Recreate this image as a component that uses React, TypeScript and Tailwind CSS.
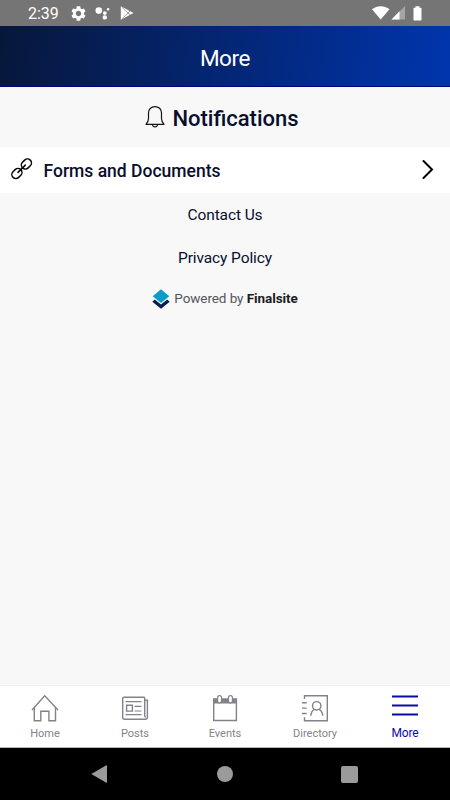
import type { ReactNode } from "react";

const StatusBar = () => (
  <div className="flex h-[26px] shrink-0 items-center justify-between bg-[#757575] pl-[28px] pr-[28px] text-white">
    <div className="flex items-center">
      <span className="w-[43px] text-[16px] leading-[26px] pt-[2px]">
        2:39
      </span>
      <svg width="15" height="15" viewBox="2 2 20 20" fill="white">
        <path d="M19.14 12.94c.04-.3.06-.61.06-.94 0-.32-.02-.64-.07-.94l2.03-1.58c.18-.14.23-.41.12-.61l-1.92-3.32c-.12-.22-.37-.29-.59-.22l-2.39.96c-.5-.38-1.03-.7-1.62-.94l-.36-2.54c-.04-.24-.24-.41-.48-.41h-3.84c-.24 0-.43.17-.47.41l-.36 2.54c-.59.24-1.13.57-1.62.94l-2.39-.96c-.22-.08-.47 0-.59.22L2.74 8.87c-.12.21-.08.47.12.61l2.03 1.58c-.05.3-.09.63-.09.94s.02.64.07.94l-2.03 1.58c-.18.14-.23.41-.12.61l1.92 3.32c.12.22.37.29.59.22l2.39-.96c.5.38 1.03.7 1.62.94l.36 2.54c.05.24.24.41.48.41h3.84c.24 0 .44-.17.47-.41l.36-2.54c.59-.24 1.13-.56 1.62-.94l2.39.96c.22.08.47 0 .59-.22l1.92-3.32c.12-.22.07-.47-.12-.61l-2.01-1.58zM12 15.6c-1.98 0-3.6-1.62-3.6-3.6s1.62-3.6 3.6-3.6 3.6 1.62 3.6 3.6-1.62 3.6-3.6 3.6z" />
      </svg>
      <svg className="ml-[9px]" width="15" height="14" viewBox="0 0 15 14" fill="white">
        <circle cx="3.8" cy="4.6" r="3.3" />
        <circle cx="9.8" cy="7.1" r="1.9" />
        <circle cx="13.1" cy="3.3" r="1.2" />
        <circle cx="9.8" cy="11.4" r="2.2" />
      </svg>
      <svg className="ml-[10px]" width="14" height="14" viewBox="0 0 14 14">
        <path d="M.8.3 13.500 7 .8 13.700Z" fill="white" />
        <path
          d="M2.200 1.500 8.600 7.600M2.200 12.500l8.200-7.700M8.300 7l2.800 2.600"
          fill="none"
          stroke="#757575"
          strokeWidth="0.7"
        />
      </svg>
    </div>
    <div className="flex items-center">
      <svg width="18" height="14" viewBox="0 0 18 14">
        <path d="M0 3.200C5.300-.8 12.200-.8 17.500 3.200L8.700 13.500Z" fill="white" />
      </svg>
      <svg className="ml-[1px]" width="14" height="14" viewBox="0 0 14 14">
        <path d="M14 0v13.500H.5Z" fill="white" opacity="0.35" />
        <path d="M8.500 5.300v8.200H.5Z" fill="white" />
      </svg>
      <svg className="ml-[8px]" width="9" height="15" viewBox="0 0 9 15" fill="white">
        <path d="M2.500.3h4v1.400h1.200q.8 0 .8.800v11.200q0 .8-.8.8H1.300q-.8 0-.8-.8V2.500q0-.8.8-.8h1.200Z" />
      </svg>
    </div>
  </div>
);

const BellIcon = () => (
  <svg
    width="20"
    height="24"
    viewBox="0 0 20 24"
    fill="none"
    stroke="#151515"
    strokeWidth="1.2"
    strokeLinejoin="round"
  >
    <path d="M10 1.600C5.800 1.600 3.500 4.500 3.500 8v5.500c0 2.500-.8 4-2.500 5.900h18c-1.700-1.900-2.500-3.400-2.500-5.900V8c0-3.500-2.300-6.400-6.500-6.400Z" />
    <path d="M7.300 19.600c.4 1.500 1.300 2.300 2.700 2.300s2.300-.8 2.700-2.300" />
  </svg>
);

const LinkIcon = () => (
  <svg
    className="-mt-[2px]"
    width="22"
    height="22"
    viewBox="0 0 22 22"
    fill="none"
    stroke="#080808"
    strokeWidth="1.500"
    strokeLinecap="round"
  >
    <rect x="-5.500" y="-4" width="11" height="8" rx="4" transform="translate(5.900 15.500) rotate(-45)" />
    <rect x="-5.500" y="-4" width="11" height="8" rx="4" transform="translate(15.400 6) rotate(-45)" />
    <path d="m7 14.400 7.300-7.300" />
  </svg>
);

const FinalsiteLogo = () => (
  <svg width="18" height="20" viewBox="0 0 18 20">
    <path d="m2.800 10.500 6.200 5 6.200-5 2.500 2.300L9 19.700.3 12.800Z" fill="#0b1c50" />
    <path d="m9 .2 8.300 7L9 13.900.7 7.200Z" fill="#0d9bc9" />
  </svg>
);

const HomeIcon = () => (
  <>
    <path d="M2 17 14.700 2.800 28 17" />
    <path d="M4.300 14.700v13h6.500v-9.400h8.100v9.400h6.600v-13" />
  </>
);

const PostsIcon = () => (
  <>
    <path d="M24.700 4.300H4q-1.300 0-1.300 1.300v18.700q0 2 2 2h20.500q2.200 0 2.200-2V7.300h-2.700" />
    <path d="M24.700 4.300v18.400q0 1.300 1.200 1.300" />
    <path d="M5.500 8.600h16M14.500 13.300h7M14.500 18h7M5.500 21.600h16" strokeWidth="1.200" />
    <path d="M6.600 12.300h5.800v5.800H6.600Z" />
  </>
);

const EventsIcon = () => (
  <>
    <path d="M3.700 6h22.700v21.500H3.700Z" />
    <path d="M3.500 6h23v4.500h-23Z" fill="#828388" stroke="none" />
    <rect x="7.600" y="2.600" width="3.900" height="7.300" rx="1.900" fill="white" strokeWidth="1.200" />
    <rect x="18.500" y="2.600" width="3.900" height="7.300" rx="1.900" fill="white" strokeWidth="1.200" />
  </>
);

const DirectoryIcon = () => (
  <>
    <path d="M4.500 6V2.700h22.800v25H4.500v-3.400" />
    <path d="M2 9.700h4.700M2 15.100h4.700M2 20.500h4.700" />
    <circle cx="16.700" cy="12.800" r="4.200" />
    <path d="M10.900 22.700c.2-3.200 1.400-5.300 3.700-6.500M22.700 22.700c-.2-3.200-1.600-5.300-3.900-6.500" />
  </>
);

const MoreIcon = () => (
  <path d="M2 3.500h26M2 12.500h26M2 21.500h26" strokeWidth="2" />
);

const tabs: { label: string; icon: ReactNode; active?: boolean }[] = [
  { label: "Home", icon: <HomeIcon /> },
  { label: "Posts", icon: <PostsIcon /> },
  { label: "Events", icon: <EventsIcon /> },
  { label: "Directory", icon: <DirectoryIcon /> },
  { label: "More", icon: <MoreIcon />, active: true },
];

const TabBar = () => (
  <nav className="grid h-[63px] shrink-0 grid-cols-5 border-t border-b border-t-[#f0f0f0] border-b-[#b5b5b5] bg-white">
    {tabs.map(({ label, icon, active }) => (
      <div
        key={label}
        className={`flex flex-col items-center pt-[7px] ${
          active ? "text-[#0b0ba8]" : "text-[#828388]"
        }`}
      >
        <svg
          width="30"
          height="30"
          viewBox="0 0 30 30"
          fill="none"
          stroke="currentColor"
          strokeWidth="1.400"
        >
          {icon}
        </svg>
        <span
          className={
            active
              ? "mt-[3px] text-[12px] leading-[14px] tracking-[-0.2px]"
              : "mt-[4px] text-[11px] leading-[14px]"
          }
        >
          {label}
        </span>
      </div>
    ))}
  </nav>
);

const SystemNav = () => (
  <div className="grid h-[52px] shrink-0 grid-cols-[198px_53px_196px] items-center justify-items-center bg-black">
    <svg width="16" height="18" viewBox="0 0 16 18" fill="#9b9b9b">
      <path d="M.3 9 15.300.2q.7-.2.7.5v16.600q0 .7-.7.5Z" />
    </svg>
    <div className="size-[16px] rounded-full bg-[#9b9b9b]" />
    <div className="size-[17px] rounded-[2px] bg-[#9b9b9b]" />
  </div>
);

export default function App() {
  return (
    <div className="flex h-[800px] w-[450px] flex-col overflow-hidden bg-[#f8f8f8] font-['Roboto',sans-serif] text-[#080e2c]">
      <StatusBar />
      <header className="flex h-[61px] shrink-0 items-center justify-center border-b border-[#020280] bg-[linear-gradient(98deg,#07173b,#0035ad)] pt-[5px] text-[22.500px] tracking-[-0.4px] text-white">
        More
      </header>

      <main className="flex flex-1 flex-col">
        <div className="flex h-[60px] items-center justify-center gap-[7px] pr-[6px]">
          <BellIcon />
          <h2 className="pt-[2px] text-[22px] font-medium">Notifications</h2>
        </div>

        <div className="flex h-[46px] items-center bg-white pl-[11px] pr-[16px]">
          <LinkIcon />
          <span className="ml-[10.500px] flex-1 pt-[3px] text-[17.500px] font-medium">
            Forms and Documents
          </span>
          <svg
            className="-mt-[2px]"
            width="13"
            height="20"
            viewBox="0 0 13 20"
            fill="none"
            stroke="black"
            strokeWidth="2"
            strokeLinecap="round"
          >
            <path d="m2.500 2 8.500 8.500-8.500 8.500" />
          </svg>
        </div>

        <div className="flex flex-col items-center pt-px text-[15.500px] leading-[43px] tracking-[-0.100px]">
          <span>Contact Us</span>
          <span>Privacy Policy</span>
        </div>

        <div className="flex h-[38px] items-center justify-center gap-[4px] text-[13.500px] text-[#55565b]">
          <FinalsiteLogo />
          <span className="-mt-px whitespace-nowrap tracking-[-0.080px]">
            Powered by <b className="font-bold text-[#1c1c22]">Finalsite</b>
          </span>
        </div>
      </main>

      <TabBar />
      <SystemNav />
    </div>
  );
}
